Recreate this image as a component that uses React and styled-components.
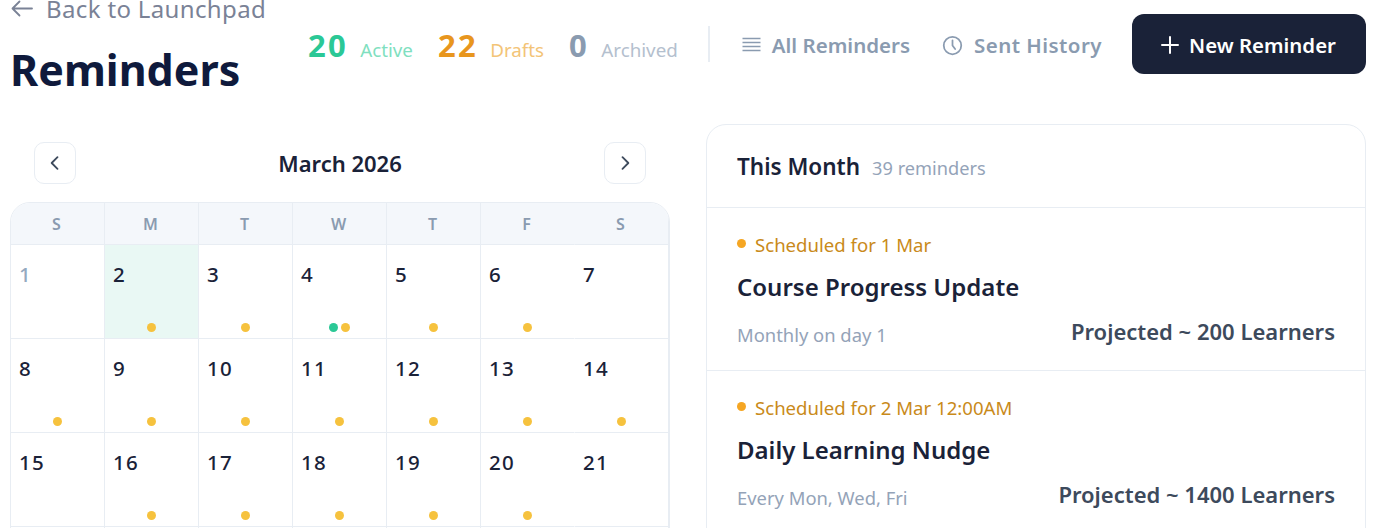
import React from "react";
import styled, { createGlobalStyle } from "styled-components";

const Global = createGlobalStyle`
  html, body { margin: 0; padding: 0; height: 100%; overflow: hidden; background: #fff; }
  body { font-family: "Noto Sans", sans-serif; color: #1a2238; }
  * { box-sizing: border-box; }
`;
const Page = styled.div`
  height: 528px;
  overflow: hidden;
  padding: 0 13px 0 10px;
`;
const Header = styled.header`
  height: 124px;
  display: flex;
  justify-content: space-between;
  align-items: flex-start;
`;
const TitleBlock = styled.div`
  margin-top: -7px;
  display: flex;
  flex-direction: column;
`;
const BackLink = styled.a`
  display: flex;
  align-items: center;
  gap: 13px;
  color: #7a8296;
  font-size: 24px;
  letter-spacing: 0.35px;
  line-height: 32px;
`;
const Title = styled.h1`
  margin: 15px 0 0;
  color: #0f1a3c;
  font-size: 43px;
  line-height: 60px;
  font-weight: 700;
`;
const Actions = styled.div`
  display: flex;
  align-items: center;
  margin-top: 14px;
  height: 60px;
`;
const Stats = styled.div`
  display: flex;
  align-items: baseline;
  gap: 25px;
  margin: 2px 30px 0 0;
`;
const Stat = styled.div`
  display: flex;
  align-items: baseline;
  gap: 12px;
`;
const StatNumber = styled.span`
  font-size: 31px;
  font-weight: 700;
  letter-spacing: 2.4px;
  color: ${p => p.$color};
`;
const StatLabel = styled.span`
  font-size: 18.8px;
  color: ${p => p.$color};
`;
const Divider = styled.div`
  width: 2px;
  height: 36px;
  background: #e8edf3;
  margin: 0 32px 0 0;
`;
const Tab = styled.a`
  display: flex;
  align-items: center;
  gap: 11px;
  color: #8a9bb0;
  font-size: 20.5px;
  letter-spacing: ${p => p.$spacing || "0"};
  font-weight: 600;
  margin: 2px ${p => p.$gap || "30px"} 0 0;
`;
const NewButton = styled.button`
  width: 234px;
  height: 60px;
  border: 0;
  border-radius: 12px;
  background: #1a2238;
  color: #fff;
  font: 600 20.4px "Noto Sans", sans-serif;
  display: flex;
  align-items: center;
  justify-content: center;
  gap: 9px;
  padding: 2px 2px 0 0;
`;
const Columns = styled.main`
  display: grid;
  grid-template-columns: 660px 660px;
  gap: 36px;
  align-items: start;
`;
const CalendarNav = styled.div`
  display: flex;
  align-items: center;
  justify-content: space-between;
  padding: 18px 24px;
`;
const NavButton = styled.button`
  width: 42px;
  height: 42px;
  border: 1px solid #e8edf3;
  border-radius: 10px;
  background: #fff;
  color: #3d4a5c;
  display: flex;
  align-items: center;
  justify-content: center;
  padding: 0;
`;
const MonthLabel = styled.div`
  font-size: 22px;
  font-weight: 600;
  color: #1a2238;
`;
const Calendar = styled.div`
  border: 1px solid #e8edf3;
  border-radius: 20px 20px 0 0;
  overflow: hidden;
`;
const CalendarGrid = styled.div`
  display: grid;
  grid-template-columns: repeat(7, 94px);
`;
const WeekDay = styled.div`
  height: 42px;
  background: #f4f7fb;
  border-right: 1px solid #e8edf3;
  border-bottom: 1px solid #e8edf3;
  padding-right: 2px;
  display: flex;
  align-items: center;
  justify-content: center;
  color: #8a9bb0;
  font-size: 16px;
  font-weight: 600;
  &:nth-child(7n + 6) { border-right-color: transparent; }
`;
const Day = styled.div`
  position: relative;
  height: 94px;
  padding: 16px 8px;
  border-right: 1px solid #e8edf3;
  border-bottom: 1px solid #e8edf3;
  background: ${p => (p.$today ? "#e9f8f4" : "#fff")};
  color: ${p => (p.$muted ? "#94a9c0" : "#1a2238")};
  font-size: 20.5px;
  letter-spacing: 1.2px;
  line-height: 26px;
  font-weight: 500;
  &:nth-child(7n + 6) { border-right-color: transparent; }
`;
const Dots = styled.div`
  position: absolute;
  left: 0;
  right: 0;
  bottom: 6px;
  display: flex;
  justify-content: center;
  gap: 3px;
`;
const Dot = styled.span`
  width: 9px;
  height: 9px;
  border-radius: 50%;
  background: ${p => p.$color};
`;
const Panel = styled.section`
  border: 1px solid #e8edf3;
  border-radius: 20px;
  overflow: hidden;
  min-height: 600px;
`;
const PanelHeader = styled.div`
  height: 83px;
  padding: 0 30px;
  display: flex;
  align-items: center;
  gap: 12px;
  border-bottom: 1px solid #e8edf3;
`;
const PanelTitle = styled.h2`
  margin: 0;
  font-size: 22.5px;
  font-weight: 600;
  color: #1a2238;
`;
const PanelCount = styled.span`
  font-size: 18.2px;
  color: #94a3b8;
  padding-top: 3px;
`;
const Item = styled.article`
  height: 163px;
  padding: 22px 30px 0;
  border-bottom: 1px solid #e8edf3;
`;
const Schedule = styled.div`
  display: flex;
  align-items: center;
  gap: 9px;
  color: #c98a1a;
  font-size: 18.6px;
  line-height: 30px;
`;
const ScheduleDot = styled.span`
  width: 9px;
  height: 9px;
  border-radius: 50%;
  background: #f5a623;
  margin-top: -4px;
`;
const ItemTitle = styled.h3`
  margin: 11px 0 0;
  font-size: 24px;
  line-height: 32px;
  font-weight: 600;
  color: #1a2238;
`;
const ItemMeta = styled.div`
  margin-top: 15px;
  display: flex;
  justify-content: space-between;
  align-items: center;
`;
const Recurrence = styled.span`
  font-size: 18.4px;
  color: #94a3b8;
  margin-top: 4px;
`;
const Projected = styled.span`
  font-size: 22px;
  font-weight: 600;
  color: #3d4a5c;
  margin-top: -3px;
`;

const Y = "#f6c23e";
const G = "#2bc896";
const dotted = {
  2: [Y], 3: [Y], 4: [G, Y], 5: [Y], 6: [Y], 8: [Y], 9: [Y], 10: [Y], 11: [Y], 12: [Y], 13: [Y], 14: [Y],
  16: [Y], 17: [Y], 18: [Y], 19: [Y], 20: [Y], 23: [Y], 24: [Y], 25: [Y], 26: [Y], 27: [Y], 30: [Y], 31: [Y],
};
const days = Array.from({ length: 31 }, (_, i) => i + 1);
const items = [
  ["Scheduled for 1 Mar", "Course Progress Update", "Monthly on day 1", "Projected ~ 200 Learners"],
  ["Scheduled for 2 Mar 12:00AM", "Daily Learning Nudge", "Every Mon, Wed, Fri", "Projected ~ 1400 Learners"],
];

export default function App() {
  return (
    <Page>
      <Global />
      <Header>
        <TitleBlock>
          <BackLink>
            <svg width="23" height="24" viewBox="0 0 23 24" fill="none" stroke="#7a8296" strokeWidth="1.8" strokeLinecap="round" strokeLinejoin="round">
              <path d="M22 11.5H2.5M9.5 4.5l-7 7 7 7" />
            </svg>
            Back to Launchpad
          </BackLink>
          <Title>Reminders</Title>
        </TitleBlock>
        <Actions>
          <Stats>
            <Stat><StatNumber $color="#2bc896">20</StatNumber><StatLabel $color="#7fdfc0">Active</StatLabel></Stat>
            <Stat><StatNumber $color="#e8961e">22</StatNumber><StatLabel $color="#f3c477">Drafts</StatLabel></Stat>
            <Stat><StatNumber $color="#8a9bb0">0</StatNumber><StatLabel $color="#b4c0ce">Archived</StatLabel></Stat>
          </Stats>
          <Divider />
          <Tab $gap="32px">
            <svg width="19" height="20" viewBox="0 0 19 20" stroke="#8a9bb0" strokeWidth="1.6">
              <path d="M0.5 3.5h18M0.5 7.5h18M0.5 11.5h18M0.5 15.5h18" />
            </svg>
            All Reminders
          </Tab>
          <Tab $spacing="0.45px">
            <svg width="21" height="21" viewBox="0 0 24 24" fill="none" stroke="#8a9bb0" strokeWidth="2" strokeLinecap="round" strokeLinejoin="round">
              <circle cx="12" cy="12" r="10" />
              <path d="M12 6v6l3 4" />
            </svg>
            Sent History
          </Tab>
          <NewButton>
            <svg width="20" height="20" viewBox="0 0 20 20" stroke="#fff" strokeWidth="2" strokeLinecap="round">
              <path d="M10 2v16M2 10h16" />
            </svg>
            New Reminder
          </NewButton>
        </Actions>
      </Header>
      <Columns>
        <div>
          <CalendarNav>
            <NavButton>
              <svg width="20" height="20" viewBox="0 0 24 24" fill="none" stroke="currentColor" strokeWidth="2.2" strokeLinecap="round" strokeLinejoin="round"><path d="M15 5l-7 7 7 7" /></svg>
            </NavButton>
            <MonthLabel>March 2026</MonthLabel>
            <NavButton>
              <svg width="20" height="20" viewBox="0 0 24 24" fill="none" stroke="currentColor" strokeWidth="2.2" strokeLinecap="round" strokeLinejoin="round"><path d="M9 5l7 7-7 7" /></svg>
            </NavButton>
          </CalendarNav>
          <Calendar>
            <CalendarGrid>
              {["S", "M", "T", "W", "T", "F", "S"].map((d, i) => <WeekDay key={i}>{d}</WeekDay>)}
              {days.map(d => (
                <Day key={d} $today={d === 2} $muted={d === 1}>
                  {d}
                  {dotted[d] && <Dots>{dotted[d].map((c, i) => <Dot key={i} $color={c} />)}</Dots>}
                </Day>
              ))}
            </CalendarGrid>
          </Calendar>
        </div>
        <Panel>
          <PanelHeader>
            <PanelTitle>This Month</PanelTitle>
            <PanelCount>39 reminders</PanelCount>
          </PanelHeader>
          {items.map(([s, t, r, p]) => (
            <Item key={t}>
              <Schedule><ScheduleDot />{s}</Schedule>
              <ItemTitle>{t}</ItemTitle>
              <ItemMeta><Recurrence>{r}</Recurrence><Projected>{p}</Projected></ItemMeta>
            </Item>
          ))}
        </Panel>
      </Columns>
    </Page>
  );
}
